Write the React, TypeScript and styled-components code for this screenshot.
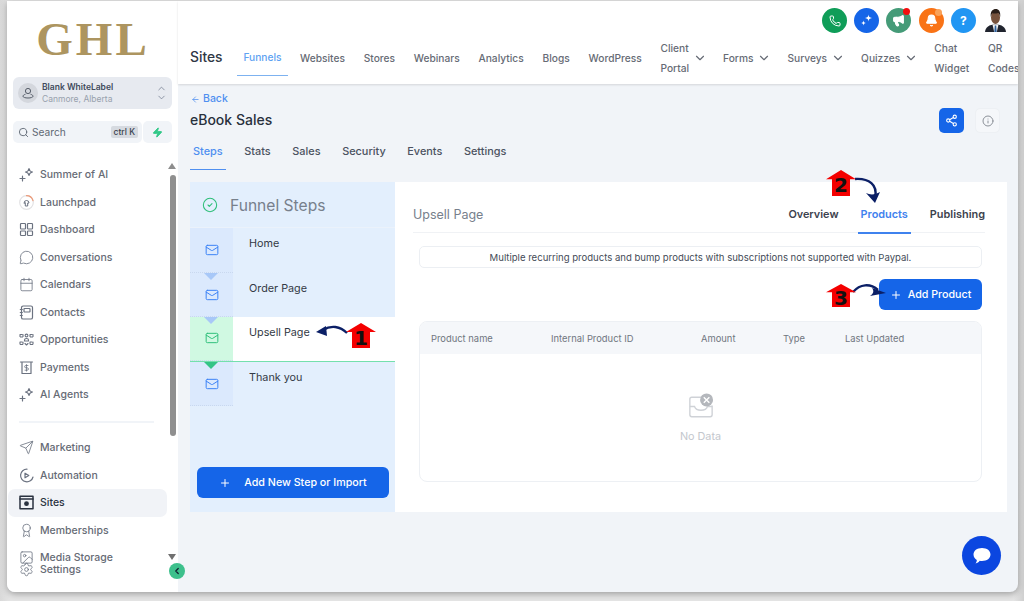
import React from "react";
import styled, { createGlobalStyle } from "styled-components";
import { Phone, Megaphone, Bell, ChevronDown, ChevronUp, Search, Zap, Share2, Info, Plus, Mail, CircleCheck, MessageCircle, Calendar, Send, Award, Image, Settings, ChevronLeft, ArrowLeft } from "lucide-react";

const Global = createGlobalStyle`
  html, body { margin: 0; padding: 0; width: 1024px; height: 601px; overflow: hidden; background: #dcdcdc; }
  * { box-sizing: border-box; }
  body { font-family: Inter, "Liberation Sans", sans-serif; }
`;

const Frame = styled.div`
  position: relative; width: 1024px; height: 601px; padding: 1px 6px 9px 7px; background: linear-gradient(90deg,#d9d9d9,#e4e4e4 1%,#e4e4e4 99%,#cfcfcf);
`;
const Win = styled.div`
  display: flex; height: 591px; border-radius: 0 0 8px 8px; overflow: hidden; background: #f1f4f8; box-shadow: 0 2px 6px rgba(0,0,0,.3);
`;
const Side = styled.aside`
  width: 171px; flex: none; background: #fff; display: flex; flex-direction: column; position: relative;
`;
const Logo = styled.div`
  height: 76px; padding: 13px 0 0 1px; text-align: center; font-family: "Liberation Serif", serif; font-weight: 700; font-size: 47px; line-height: 50px; letter-spacing: 3px; color: #ad9560;
`;
const Account = styled.div`
  margin: 0 6px; height: 32px; border-radius: 6px; background: #e7eaf0; display: flex; align-items: center; padding: 0 5px; gap: 4px;
`;
const Avatar = styled.span`
  width: 20px; height: 20px; border-radius: 50%; background: #d4d7dd; display: flex; align-items: center; justify-content: center; color: #555c68; flex: none;
`;
const AccountText = styled.div`
  flex: 1; min-width: 0; font-size: 8.5px; line-height: 12px; color: #98a1ad; white-space: nowrap;
  b { display: block; font-weight: 600; color: #3f4a5c; }
`;
const Chevrons = styled.span`
  display: flex; flex-direction: column; color: #667085; svg { margin: -1px 0; }
`;
const SearchRow = styled.div`
  margin: 12px 6px 0; display: flex; gap: 1px;
`;
const SearchBox = styled.div`
  flex: 1; height: 22px; background: #f1f4f8; border-radius: 5px; display: flex; align-items: center; padding: 0 4px 0 5px; gap: 3px; font-size: 10.2px; color: #5f6874;
`;
const SearchLabel = styled.span`flex: 1;`;
const Kbd = styled.span`
  background: #d6dae0; color: #39424f; border-radius: 2px; font-size: 8.5px; font-weight: 500; padding: 2px 3px; line-height: 8px; height: 12px;
`;
const Bolt = styled.div`
  width: 29px; height: 22px; background: #f1f4f8; border-radius: 5px; display: flex; align-items: center; justify-content: center; color: #35c98a;
`;
const ScrollTop = styled.div`
  position: absolute; right: 2px; top: 162px; width: 0; height: 0; border: 4px solid transparent; border-top: 0; border-bottom: 6px solid #8d8d8d;
`;
const ScrollThumb = styled.div`
  position: absolute; right: 2.5px; top: 174px; width: 6px; height: 261px; border-radius: 3px; background: #8f8f8f;
`;
const ScrollBottom = styled.div`
  position: absolute; right: 2px; top: 553px; width: 0; height: 0; border: 4px solid transparent; border-bottom: 0; border-top: 6px solid #707070;
`;
const Nav = styled.nav`
  margin-top: 18px; height: 402.5px; overflow: hidden; display: flex; flex-direction: column; padding-left: 1px;
`;
const Item = styled.div<{ $active?: boolean }>`
  height: 27.5px; width: 159px; display: flex; align-items: center; gap: 6px; padding-left: 11px; border-radius: 7px;
  font-size: 10.5px; font-weight: 500; white-space: nowrap; flex: none;
  color: ${p => (p.$active ? "#2a3240" : "#666b75")};
  background: ${p => (p.$active ? "#f1f3f7" : "transparent")};
  svg { flex: none; color: ${p => (p.$active ? "#2a3240" : "#6b7280")}; }
`;
const Rule = styled.div`
  margin: 12px 0 11.5px 11px; width: 135px; height: 2px; flex: none; background: #f1f4f8;
`;
const SettingsRow = styled(Item)`
  position: absolute; left: 1px; bottom: 14px; background: transparent; height: 18px;
`;
const Collapse = styled.div`
  position: absolute; left: 169px; top: 563px; width: 16px; height: 16px; border-radius: 50%; background: #3dc08c; color: #123; display: flex; align-items: center; justify-content: center; z-index: 3;
`;
const Main = styled.main`
  flex: 1; min-width: 0; display: flex; flex-direction: column;
`;
const Header = styled.header`
  height: 83px; background: #fff; box-shadow: 0 1px 2px rgba(0,0,0,.12); position: relative; z-index: 1; padding-left: 12px;
`;
const TopIcons = styled.div`
  height: 36px; display: flex; justify-content: flex-end; align-items: center; padding: 3px 10px 0 0; gap: 7.2px;
`;
const Round = styled.span<{ $bg: string }>`
  width: 25px; height: 25px; border-radius: 50%; background: ${p => p.$bg}; color: #fff; display: flex; align-items: center; justify-content: center; position: relative; font-size: 12px; font-weight: 700;
`;
const Dot = styled.i`
  position: absolute; right: 1px; top: 0; width: 7px; height: 7px; background: #f40e0e; border-radius: 50%;
`;
const RingDot = styled.i`
  position: absolute; right: 2px; top: 1px; width: 7px; height: 7px; background: #f9a25a; border-radius: 50%;
`;
const Person = styled.svg`
  width: 25px; height: 25px;
`;
const TopNav = styled.div`
  display: flex; align-items: flex-start; height: 47px;
`;
const SitesTitle = styled.div`
  font-size: 13.8px; font-weight: 500; color: #2f3744; width: 47px; flex: none; padding-top: 12px; line-height: 17px;
`;
const TopTab = styled.div<{ $chev?: boolean }>`
  font-size: 10.2px; font-weight: 500; white-space: nowrap; line-height: 20px; color: #666b75; flex: none;
  margin-right: ${p => (p.$chev ? 16 : 18.8)}px; display: flex; align-items: center; gap: 4px; height: 42px;
`;
const ActiveTopTab = styled.div`
  font-size: 10.2px; font-weight: 500; line-height: 20px; color: #5ea2f2; width: 51px; flex: none; height: 39px; margin-right: 12px;
  display: flex; align-items: center; justify-content: center; padding-top: 2px; border-bottom: 1.5px solid #7db2f0;
`;
const Body = styled.div`
  flex: 1; padding: 7px 12px 0 12px; position: relative; display: flex; flex-direction: column;
`;
const BackLink = styled.div`
  font-size: 10.5px; color: #4f8ff0; display: flex; align-items: center; gap: 3px; line-height: 16px; font-weight: 500; padding-left: 1px;
`;
const TitleRow = styled.div`
  display: flex; justify-content: space-between; align-items: flex-start; margin-top: 3px; height: 24px;
`;
const Title = styled.h1`
  margin: 0; font-size: 14px; font-weight: 500; color: #28303c; line-height: 20px;
`;
const TitleBtns = styled.div`
  display: flex; gap: 11px; margin-top: -2px; margin-right: 6px;
`;
const ShareBtn = styled.span`
  width: 25px; height: 25px; border-radius: 5px; background: #1565e8; color: #fff; display: flex; align-items: center; justify-content: center;
`;
const InfoBtn = styled.span`
  width: 25px; height: 25px; border-radius: 5px; background: #f5f7fa; border: 1px solid #edf0f4; color: #8b9098; display: flex; align-items: center; justify-content: center;
`;
const Tabs = styled.div`
  display: flex; gap: 21.6px; margin-top: 9px; height: 33px; padding-left: 3px;
`;
const SubTab = styled.div<{ $active?: boolean }>`
  font-size: 10.9px; font-weight: 500; line-height: 16px; height: 27px; position: relative; color: ${p => (p.$active ? "#4f8ff0" : "#4b5260")};
  ${p => p.$active ? "&::after{content:'';position:absolute;left:-3px;right:-3px;bottom:0;height:1.5px;background:#4f8ff0;}" : ""}
`;
const Panel = styled.section`
  display: flex; height: 330px; margin-top: 6px; margin-right: -1px;
`;
const Steps = styled.div`
  width: 205px; flex: none; background: #e3effd; position: relative; display: flex; flex-direction: column;
`;
const StepsHead = styled.div`
  height: 46px; display: flex; align-items: center; gap: 12px; padding: 1px 0 0 12px; font-size: 15.6px; color: #77808c; border-bottom: 1px solid #ebf2fb; svg { color: #2fbf7a; }
`;
const Step = styled.div<{ $active?: boolean }>`
  height: 44.6px; display: flex; position: relative;
  background: ${p => (p.$active ? "#fff" : "transparent")};
  ${p => (p.$active ? "border-bottom: 1px solid #74e0ad;" : "")}
`;
const StepIcon = styled.div<{ $active?: boolean }>`
  width: 43px; flex: none; display: flex; align-items: flex-end; justify-content: center; padding-bottom: 14.500px; position: relative;
  background: ${p => (p.$active ? "#d0f9e2" : "#dbe9fd")};
  color: ${p => (p.$active ? "#2fbf7a" : "#3b82f6")};
  border-bottom: 1px dotted #c9d8ef;
`;
const Arrow = styled.i<{ $green?: boolean }>`
  position: absolute; left: 14px; top: 0; width: 0; height: 0; border-left: 7px solid transparent; border-right: 7px solid transparent;
  border-top: 7px solid ${p => (p.$green ? "#34c486" : "#a8c8f8")};
`;
const StepName = styled.div`
  padding: 8px 0 0 16px; font-size: 10.8px; font-weight: 400; line-height: 16px; color: #333a45;
`;
const AddStep = styled.button`
  position: absolute; left: 7px; bottom: 14px; width: 192px; height: 31px; border: 0; border-radius: 6px; background: #1565e8; color: #fff; font: 500 10.7px Inter, sans-serif; display: flex; align-items: center; justify-content: center; gap: 13px;
`;
const Detail = styled.div`
  flex: 1; background: #fff; padding: 0 25px 0 18px; display: flex; flex-direction: column; min-width: 0;
`;
const DetailHead = styled.div`
  height: 51px; flex: none; display: flex; justify-content: space-between; margin-right: -3px; border-bottom: 1px solid #f0f2f5;
`;
const DetailTitle = styled.div`
  font-size: 12.5px; color: #77808c; padding-top: 25px; line-height: 15px;
`;
const DetailTabs = styled.div`
  display: flex; gap: 22px; padding: 25px 0 0;
`;
const DetailTab = styled.div<{ $active?: boolean }>`
  font-size: 10.9px; font-weight: 600; line-height: 14px; position: relative; color: ${p => (p.$active ? "#3f82ee" : "#3c424d")};
  ${p => p.$active ? "&::after{content:'';position:absolute;left:-3px;right:-3px;top:25px;height:1.5px;background:#3f82ee;}" : ""}
`;
const Notice = styled.div`
  margin: 13px 0 0 6px; height: 22px; flex: none; border: 1px solid #eceff3; border-radius: 5px; font-size: 9.55px; font-weight: 400; color: #444b57; display: flex; align-items: center; justify-content: center; white-space: nowrap;
`;
const ActionRow = styled.div`
  display: flex; justify-content: flex-end; margin-top: 11px; height: 31px; flex: none;
`;
const AddProduct = styled.button`
  width: 103px; height: 31px; border: 0; border-radius: 6px; background: #1565e8; color: #fff; font: 500 10.7px Inter, sans-serif; display: flex; align-items: center; justify-content: center; gap: 6px;
`;
const TableBox = styled.div`
  margin: 11px 0 0 6px; height: 161px; flex: none; border: 1px solid #edf0f4; border-radius: 8px; overflow: hidden; display: flex; flex-direction: column;
`;
const TableHead = styled.div`
  height: 32px; background: #f5f7fa; display: grid; grid-template-columns: 120px 150px 82px 62px 1fr; align-items: center; padding-left: 11px; font-size: 9.4px; color: #70767f; font-weight: 400;
`;
const Empty = styled.div`
  flex: 1; display: flex; flex-direction: column; align-items: center; padding-top: 39px; gap: 11px; font-size: 10.8px; color: #c3c7cd;
`;
const Chat = styled.div`
  position: absolute; right: 17px; top: 452px; width: 39px; height: 39px; border-radius: 50%; background: #0b46e0; display: flex; align-items: center; justify-content: center;
`;
const Anno = styled.svg<{ $x: number; $y: number }>`
  position: absolute; left: ${p => p.$x}px; top: ${p => p.$y}px; overflow: visible; z-index: 5;
`;
const AnnoHouse = styled.div<{ $x: number; $y: number; $h: number }>`
  position: absolute; left: ${p => p.$x}px; top: ${p => p.$y}px; width: 30px; height: ${p => p.$h}px; z-index: 6;
  font: 700 20px/${p => p.$h + 5}px "DejaVu Sans", sans-serif; color: #111; text-align: center;
`;
const HouseShape = styled.svg`
  position: absolute; inset: 0; z-index: -1; width: 100%; height: 100%;
`;

const House = ({ x, y, h, n }: { x: number; y: number; h: number; n: string }) => (
  <AnnoHouse $x={x} $y={y} $h={h}>
    <HouseShape viewBox="0 0 30 25" preserveAspectRatio="none">
      <path d="M15 0 L30 9 L24 9 L24 25 L6 25 L6 9 L0 9 Z" fill="#f40000" />
    </HouseShape>
    {n}
  </AnnoHouse>
);

const Ico = ({ children, w = 1.2 }: { children: React.ReactNode; w?: number }) => (
  <svg width="15" height="15" viewBox="0 0 15 15" fill="none" stroke="currentColor" strokeWidth={w} strokeLinecap="round" strokeLinejoin="round">{children}</svg>
);
const SparkIco = () => (
  <Ico>
    <path d="M1 11.5h5M3.5 9v5" />
    <path d="M10 1.5C10.4 4 11 4.6 13.5 5 11 5.4 10.4 6 10 8.5 9.6 6 9 5.4 6.5 5 9 4.6 9.6 4 10 1.5Z" />
  </Ico>
);
const LaunchIco = () => (
  <Ico>
    <circle cx="7.5" cy="7.5" r="6.8" stroke="#e2e2e4" />
    <path d="M7.5.7a6.8 6.8 0 0 1 6.5 4.9" stroke="#ec9a78" />
    <path d="M5 8a2.3 2.3 0 1 1 5 0H8.7v3H6.3V8z" strokeWidth="1" />
  </Ico>
);
const DashIco = () => (
  <Ico>
    <rect x="1.5" y="1.5" width="5" height="5.5" rx=".8" /><rect x="8.5" y="1.5" width="5" height="5.5" rx=".8" />
    <rect x="1.5" y="9" width="5" height="4.5" rx=".8" /><rect x="8.5" y="9" width="5" height="4.5" rx=".8" />
  </Ico>
);
const ContactIco = () => (
  <Ico>
    <rect x="2.5" y="1" width="11" height="13" rx="1.6" /><rect x="5" y="3.5" width="6" height="3.5" rx=".5" />
    <path d="M1.3 4.5h2M1.3 7.5h2M1.3 10.5h2" />
  </Ico>
);
const OppIco = () => (
  <Ico w={1.1}>
    <path d="M1 2.5h3v2.5H1zM11 2.5h3v2.5h-3zM1 10h3v2.5H1zM11 10h3v2.5h-3z" strokeDasharray="2 1" />
    <circle cx="7.5" cy="3.5" r="1.4" /><path d="M5.5 8c0-2 4-2 4 0v1h-4zM6 11.5l1.5 1.5 1.5-1.5" />
  </Ico>
);
const PayIco = () => (
  <Ico>
    <path d="M1.5 2h12M3 2v11.5h9V2" />
    <path d="M9 5.5H6.8a1 1 0 0 0 0 2.3h1.4a1 1 0 0 1 0 2.4H6M7.5 4.6v6.5" strokeWidth=".8" />
  </Ico>
);
const AutoIco = () => (
  <Ico>
    <path d="M8 1.2a6.3 6.3 0 1 0 6 7.8" /><path d="M6 5.2v4.6l3.8-2.3z" />
  </Ico>
);
const SitesIco = () => (
  <Ico w={1.5}>
    <rect x="1" y="1.2" width="13" height="12.6" />
    <path d="M1 4h13" />
    <circle cx="7.5" cy="8.7" r="2.4" fill="currentColor" stroke="none" />
  </Ico>
);
const MailIcon = () => <Mail size={14} strokeWidth={1.7} />;

const nav1: [string, React.ReactNode][] = [
  ["Summer of AI", <SparkIco />],
  ["Launchpad", <LaunchIco />],
  ["Dashboard", <DashIco />],
  ["Conversations", <MessageCircle size={15} strokeWidth={1.3} />],
  ["Calendars", <Calendar size={15} strokeWidth={1.3} />],
  ["Contacts", <ContactIco />],
  ["Opportunities", <OppIco />],
  ["Payments", <PayIco />],
  ["AI Agents", <SparkIco />],
];
const nav2: [string, React.ReactNode][] = [
  ["Marketing", <Send size={15} strokeWidth={1.3} />],
  ["Automation", <AutoIco />],
];

export default function App() {
  return (
    <Frame>
      <Global />
      <Win>
        <Side>
          <Logo>GHL</Logo>
          <Account>
            <Avatar>
              <svg width="12" height="12" viewBox="0 0 12 12" fill="none" stroke="currentColor" strokeWidth="1">
                <circle cx="6" cy="4" r="2.6" /><path d="M3.5 7.2C1.8 7.7 1 8.5 1 9.3c0 1 2.2 1.7 5 1.7s5-.7 5-1.7c0-.8-.8-1.6-2.5-2.1" />
              </svg>
            </Avatar>
            <AccountText><b>Blank WhiteLabel</b>Canmore, Alberta</AccountText>
            <Chevrons><ChevronUp size={11} strokeWidth={1.5} /><ChevronDown size={11} strokeWidth={1.5} /></Chevrons>
          </Account>
          <SearchRow>
            <SearchBox><Search size={11} /><SearchLabel>Search</SearchLabel><Kbd>ctrl K</Kbd></SearchBox>
            <Bolt><Zap size={11} fill="currentColor" /></Bolt>
          </SearchRow>
          <ScrollTop /><ScrollThumb /><ScrollBottom />
          <Nav>
            {nav1.map(([t, i]) => <Item key={t}>{i}{t}</Item>)}
            <Rule />
            {nav2.map(([t, i]) => <Item key={t}>{i}{t}</Item>)}
            <Item $active><SitesIco />Sites</Item>
            <Item><Award size={15} strokeWidth={1.3} />Memberships</Item>
            <Item><Image size={15} strokeWidth={1.3} />Media Storage</Item>
          </Nav>
          <SettingsRow><Settings size={15} strokeWidth={1.3} />Settings</SettingsRow>
        </Side>
        <Main>
          <Header>
            <TopIcons>
              <Round $bg="#0f9d58"><Phone size={12} /></Round>
              <Round $bg="#1565e8">
                <svg width="15" height="15" viewBox="0 0 15 15" fill="#fff">
                  <path d="M9.5 1.5c.3 2.3 1 3 3.5 3.5-2.5.5-3.2 1.2-3.5 3.5-.3-2.3-1-3-3.5-3.5 2.5-.5 3.2-1.2 3.5-3.5Z" />
                  <path d="M4.5 7.5c.2 1.6.8 2.2 2.5 2.5-1.7.3-2.3.9-2.5 2.5-.2-1.6-.8-2.2-2.5-2.5 1.7-.3 2.3-.9 2.5-2.5Z" />
                </svg>
              </Round>
              <Round $bg="#459b78"><Megaphone size={13} fill="#fff" /><Dot /></Round>
              <Round $bg="#f97316"><Bell size={13} fill="#fff" /><RingDot /></Round>
              <Round $bg="#2196f3">?</Round>
              <Person viewBox="0 0 25 25">
                <path d="M2 24c.5-5 4-7.500 10.500-7.500S22.500 19 23 24z" fill="#20242e" />
                <path d="M9.500 16.500h6L13.800 24h-2.600z" fill="#f2f2f2" />
                <path d="M11.800 17.500h1.400l.5 6.500h-2.400z" fill="#2d5f9a" />
                <ellipse cx="12.500" cy="9.500" rx="4.500" ry="6.500" fill="#77523c" />
                <path d="M7.800 9C7 3 10 1 12.800 1s5 2.200 4.400 8c-.5-2-1-3.500-2-4-2 .6-4.500.6-6 .3-.6 1-1 2.200-1.400 3.700z" fill="#2a1e18" />
              </Person>
            </TopIcons>
            <TopNav>
              <SitesTitle>Sites</SitesTitle>
              <ActiveTopTab>Funnels</ActiveTopTab>
              <TopTab>Websites</TopTab>
              <TopTab>Stores</TopTab>
              <TopTab>Webinars</TopTab>
              <TopTab>Analytics</TopTab>
              <TopTab>Blogs</TopTab>
              <TopTab>WordPress</TopTab>
              <TopTab $chev><span>Client<br />Portal</span><ChevronDown size={14} /></TopTab>
              <TopTab $chev>Forms<ChevronDown size={14} /></TopTab>
              <TopTab $chev>Surveys<ChevronDown size={14} /></TopTab>
              <TopTab $chev>Quizzes<ChevronDown size={14} /></TopTab>
              <TopTab><span>Chat<br />Widget</span></TopTab>
              <TopTab><span>QR<br />Codes</span></TopTab>
            </TopNav>
          </Header>
          <Body>
            <BackLink><ArrowLeft size={9} />Back</BackLink>
            <TitleRow>
              <Title>eBook Sales</Title>
              <TitleBtns>
                <ShareBtn><Share2 size={13} /></ShareBtn>
                <InfoBtn><Info size={12} /></InfoBtn>
              </TitleBtns>
            </TitleRow>
            <Tabs>
              <SubTab $active>Steps</SubTab>
              <SubTab>Stats</SubTab>
              <SubTab>Sales</SubTab>
              <SubTab>Security</SubTab>
              <SubTab>Events</SubTab>
              <SubTab>Settings</SubTab>
            </Tabs>
            <Panel>
              <Steps>
                <StepsHead><CircleCheck size={16} strokeWidth={1.6} />Funnel Steps</StepsHead>
                <Step><StepIcon><MailIcon /></StepIcon><StepName>Home</StepName></Step>
                <Step><StepIcon><Arrow /><MailIcon /></StepIcon><StepName>Order Page</StepName></Step>
                <Step $active><StepIcon $active><Arrow /><MailIcon /></StepIcon><StepName>Upsell Page</StepName></Step>
                <Step><StepIcon><Arrow $green /><MailIcon /></StepIcon><StepName>Thank you</StepName></Step>
                <AddStep><Plus size={12} />Add New Step or Import</AddStep>
              </Steps>
              <Detail>
                <DetailHead>
                  <DetailTitle>Upsell Page</DetailTitle>
                  <DetailTabs>
                    <DetailTab>Overview</DetailTab>
                    <DetailTab $active>Products</DetailTab>
                    <DetailTab>Publishing</DetailTab>
                  </DetailTabs>
                </DetailHead>
                <Notice>Multiple recurring products and bump products with subscriptions not supported with Paypal.</Notice>
                <ActionRow><AddProduct><Plus size={12} />Add Product</AddProduct></ActionRow>
                <TableBox>
                  <TableHead><span>Product name</span><span>Internal Product ID</span><span>Amount</span><span>Type</span><span>Last Updated</span></TableHead>
                  <Empty>
                    <svg width="26" height="26" viewBox="0 0 28 27" fill="none" stroke="#cfd2d7" strokeWidth="1.5">
                      <path d="M14 4H4a2 2 0 0 0-2 2v17a2 2 0 0 0 2 2h20a2 2 0 0 0 2-2V13" />
                      <path d="M2 14h5c1 3 3 4 7 4s6-1 7-4h5" />
                      <circle cx="20" cy="7" r="7" fill="#b4b7bc" stroke="none" />
                      <path d="M17 4l6 6M23 4l-6 6" stroke="#fff" />
                    </svg>
                    No Data
                  </Empty>
                </TableBox>
              </Detail>
            </Panel>
            <Chat>
              <svg width="20" height="18" viewBox="0 0 20 18" fill="#fff">
                <path d="M10 1c5 0 8.500 2.800 8.500 6.500S15 14 10 14c-.8 0-1.600-.1-2.300-.2-.9 1.200-2.300 2.400-4.200 2.700.9-1 1.300-2.200 1.300-3.500C3 11.800 1.500 9.900 1.500 7.500 1.500 3.800 5 1 10 1Z" />
              </svg>
            </Chat>
          </Body>
        </Main>
        <Collapse><ChevronLeft size={10} strokeWidth={3} /></Collapse>
      </Win>
      <House x={346} y={323} h={25} n="1" />
      <House x={826} y={170} h={26} n="2" />
      <House x={826} y={284} h={23} n="3" />
      <Anno $x={316} $y={324} width="32" height="16" viewBox="0 0 32 16" fill="none">
        <path d="M31 9C24 2 15 1 7 6" stroke="#0b1f66" strokeWidth="2.4" />
        <path d="M0 8l10-6 1 10z" fill="#0b1f66" />
      </Anno>
      <Anno $x={852} $y={177} width="30" height="28" viewBox="0 0 30 28" fill="none">
        <path d="M3 2C17 1 26 8 23 20" stroke="#0b1f66" strokeWidth="2.4" />
        <path d="M23 26l-9-10c4 2 9 2 14-1z" fill="#0b1f66" />
      </Anno>
      <Anno $x={852} $y={283} width="36" height="16" viewBox="0 0 36 16" fill="none">
        <path d="M1 9C8 1 18 0 26 7" stroke="#0b1f66" strokeWidth="2.4" />
        <path d="M34 10L18 13c4-3 4-5 2-8z" fill="#0b1f66" />
      </Anno>
    </Frame>
  );
}
